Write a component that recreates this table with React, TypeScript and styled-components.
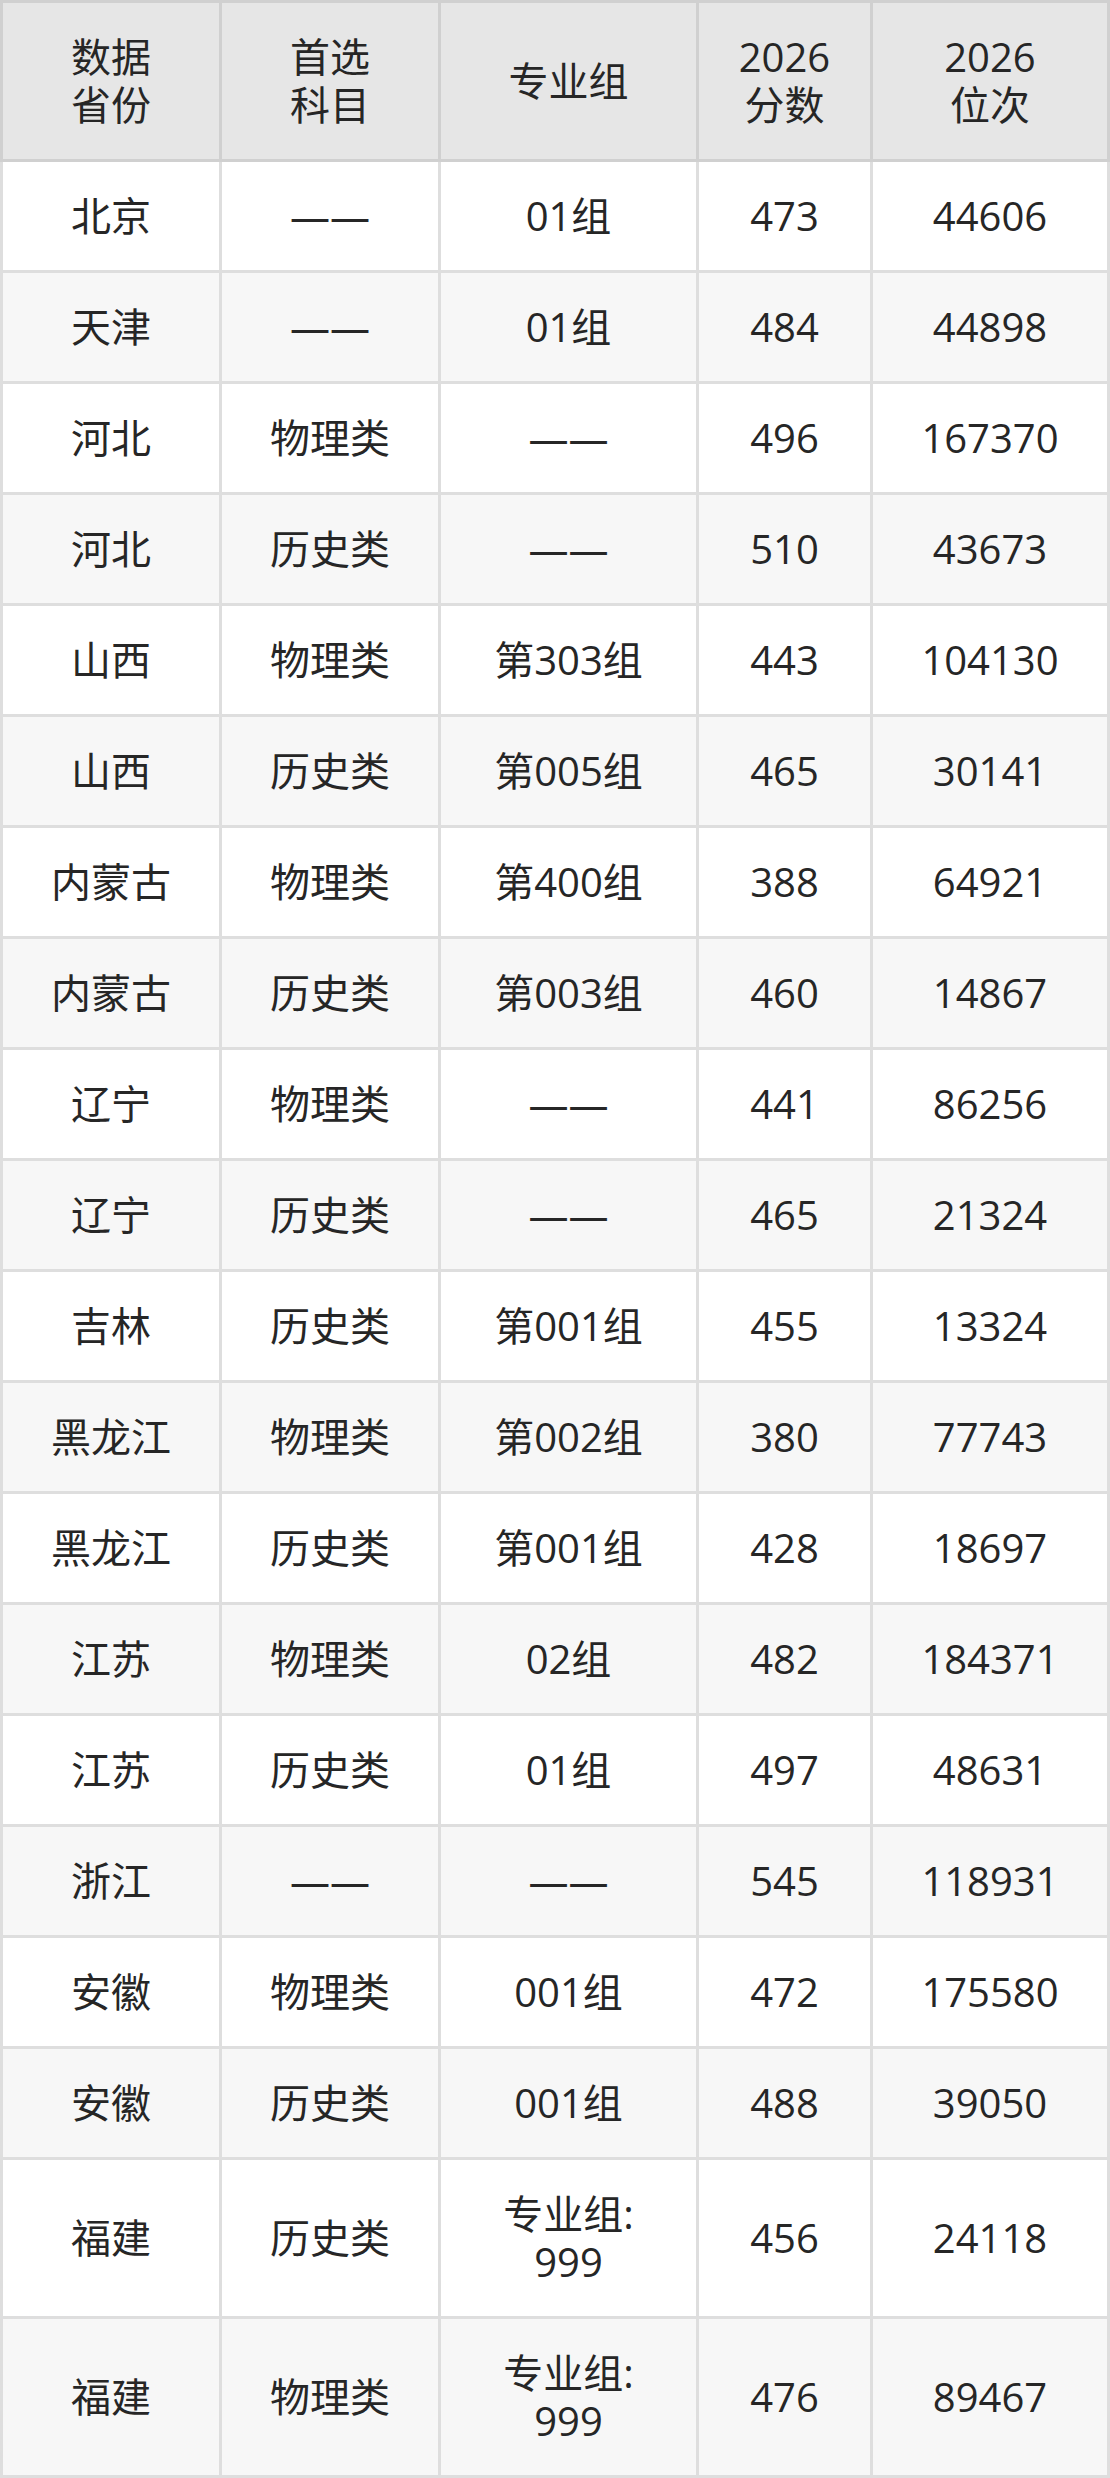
import { FunctionComponent } from "react";
import styled, { createGlobalStyle } from "styled-components";

type Row = {
  province: string;
  subject: string;
  group: string[];
  score: string;
  rank: string;
};

const rows: Row[] = [
  { province: "北京", subject: "——", group: ["01组"], score: "473", rank: "44606" },
  { province: "天津", subject: "——", group: ["01组"], score: "484", rank: "44898" },
  { province: "河北", subject: "物理类", group: ["——"], score: "496", rank: "167370" },
  { province: "河北", subject: "历史类", group: ["——"], score: "510", rank: "43673" },
  { province: "山西", subject: "物理类", group: ["第303组"], score: "443", rank: "104130" },
  { province: "山西", subject: "历史类", group: ["第005组"], score: "465", rank: "30141" },
  { province: "内蒙古", subject: "物理类", group: ["第400组"], score: "388", rank: "64921" },
  { province: "内蒙古", subject: "历史类", group: ["第003组"], score: "460", rank: "14867" },
  { province: "辽宁", subject: "物理类", group: ["——"], score: "441", rank: "86256" },
  { province: "辽宁", subject: "历史类", group: ["——"], score: "465", rank: "21324" },
  { province: "吉林", subject: "历史类", group: ["第001组"], score: "455", rank: "13324" },
  { province: "黑龙江", subject: "物理类", group: ["第002组"], score: "380", rank: "77743" },
  { province: "黑龙江", subject: "历史类", group: ["第001组"], score: "428", rank: "18697" },
  { province: "江苏", subject: "物理类", group: ["02组"], score: "482", rank: "184371" },
  { province: "江苏", subject: "历史类", group: ["01组"], score: "497", rank: "48631" },
  { province: "浙江", subject: "——", group: ["——"], score: "545", rank: "118931" },
  { province: "安徽", subject: "物理类", group: ["001组"], score: "472", rank: "175580" },
  { province: "安徽", subject: "历史类", group: ["001组"], score: "488", rank: "39050" },
  { province: "福建", subject: "历史类", group: ["专业组:", "999"], score: "456", rank: "24118" },
  { province: "福建", subject: "物理类", group: ["专业组:", "999"], score: "476", rank: "89467" },
];

const headers: string[][] = [
  ["数据", "省份"],
  ["首选", "科目"],
  ["专业组"],
  ["2026", "分数"],
  ["2026", "位次"],
];

const widths = [219, 219, 258, 174, 237];

const GlobalStyle = createGlobalStyle`
  html, body {
    margin: 0;
    padding: 0;
    background: #fff;
  }
  body {
    font-family: "Open Sans", "Noto Sans CJK SC", sans-serif;
    color: #262626;
  }
`;

const ScoreTable = styled.table`
  width: 1110px;
  table-layout: fixed;
  border-collapse: collapse;
  font-size: 40px;
  line-height: 48px;
  text-align: center;
`;

const Col = styled.col<{ $width: number }>`
  width: ${(p) => p.$width}px;
`;

const HeadCell = styled.th`
  background: #e6e6e6;
  border: 3px solid #d0d0d0;
  font-weight: normal;
  padding: 30px 6px;
`;

const BodyRow = styled.tr<{ $striped: boolean }>`
  background: ${(p) => (p.$striped ? "#f7f7f7" : "#ffffff")};
`;

const Cell = styled.td`
  border: 3px solid #dedede;
  padding: 30px 6px;
`;

const Line = styled.span`
  display: block;
`;

const Lines: FunctionComponent<{ lines: string[] }> = ({ lines }) => (
  <>
    {lines.map((l, i) => (
      <Line key={i}>{l}</Line>
    ))}
  </>
);

const App: FunctionComponent = () => {
  return (
    <>
      <GlobalStyle />
      <ScoreTable>
        <colgroup>
          {widths.map((w, i) => (
            <Col key={i} $width={w} />
          ))}
        </colgroup>
        <thead>
          <tr>
            {headers.map((h, i) => (
              <HeadCell key={i}>
                <Lines lines={h} />
              </HeadCell>
            ))}
          </tr>
        </thead>
        <tbody>
          {rows.map((r, i) => (
            <BodyRow key={i} $striped={i % 2 === 1}>
              <Cell>{r.province}</Cell>
              <Cell>{r.subject}</Cell>
              <Cell>
                <Lines lines={r.group} />
              </Cell>
              <Cell>{r.score}</Cell>
              <Cell>{r.rank}</Cell>
            </BodyRow>
          ))}
        </tbody>
      </ScoreTable>
    </>
  );
};

export default App;
